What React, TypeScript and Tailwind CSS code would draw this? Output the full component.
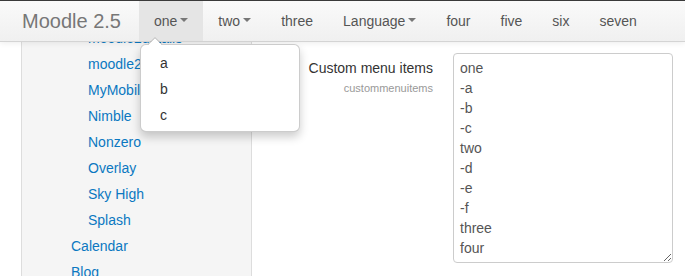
import React from "react";

const font = { fontFamily: '"Liberation Sans", Arial, sans-serif' };

function Caret() {
  return (
    <span className="inline-block w-0 h-0 ml-[3px] border-x-4 border-x-transparent border-t-4 border-t-[#777] align-middle mb-[2px]" />
  );
}

const navItems: { label: string; caret?: boolean; active?: boolean }[] = [
  { label: "one", caret: true, active: true },
  { label: "two", caret: true },
  { label: "three" },
  { label: "Language", caret: true },
  { label: "four" },
  { label: "five" },
  { label: "six" },
  { label: "seven" },
];

const themes = ["moodle2details", "moodle2bootstrap", "MyMobile", "Nimble", "Nonzero", "Overlay", "Sky High", "Splash"];

export default function App() {
  return (
    <div className="relative w-[685px] h-[276px] overflow-hidden bg-white" style={font}>
      {/* page body */}
      <div className="flex h-full pl-[21px]">
        <div className="w-[231px] h-full border-x border-[#dddddd] bg-[#f5f5f5] pt-[25px]">
          {themes.map((t) => (
            <div key={t} className="h-[26px] leading-[26px] pl-[66px] text-[14px] text-[#0b78c1] whitespace-nowrap">
              {t}
            </div>
          ))}
          <div className="h-[26px] leading-[26px] pl-[49px] text-[14px] text-[#0b78c1]">Calendar</div>
          <div className="h-[26px] leading-[26px] pl-[49px] text-[14px] text-[#0b78c1]">Blog</div>
        </div>
        <div className="flex-1 flex items-start pt-[53px]">
          <div className="w-[181px] text-right pt-[5px]">
            <div className="text-[14px] leading-[20px] text-[#333]">Custom menu items</div>
            <div className="text-[11px] leading-[14px] mt-[3px] text-[#999]">custommenuitems</div>
          </div>
          <textarea
            readOnly
            className="ml-[20px] w-[220px] h-[210px] border border-[#cccccc] rounded-[4px] px-[6px] py-[4px] text-[14px] leading-[20px] text-[#555] overflow-hidden resize bg-white outline-none"
            style={font}
            value={"one\n-a\n-b\n-c\ntwo\n-d\n-e\n-f\nthree\nfour\nfive\nsix\nseven"}
          />
        </div>
      </div>

      {/* fixed navbar */}
      <div className="absolute left-0 top-0 w-full h-[42px] border-t border-t-[#3a3a3a] border-b border-b-[#d4d4d4] bg-gradient-to-b from-[#fafafa] to-[#f0f0f0] shadow-[0_1px_6px_rgba(0,0,0,0.08)] flex items-stretch z-10">
        <div className="w-[139px] pl-[22px] flex items-center text-[20px] text-[#777] whitespace-nowrap">Moodle 2.5</div>
        {navItems.map((n) => (
          <div
            key={n.label}
            className={`px-[15px] flex items-center text-[14px] text-[#555] whitespace-nowrap ${n.active ? "bg-[#e5e5e5]" : ""}`}
          >
            {n.label}
            {n.caret && <Caret />}
          </div>
        ))}
      </div>

      {/* dropdown menu */}
      <div className="absolute left-[140px] top-[44px] w-[160px] bg-white border border-black/20 rounded-[6px] shadow-[0_5px_10px_rgba(0,0,0,0.2)] pt-[5px] pb-[3px] z-20">
        {["a", "b", "c"].map((i) => (
          <div key={i} className="pl-[19px] py-[3px] text-[14px] leading-[20px] text-[#333]">
            {i}
          </div>
        ))}
      </div>
      <svg className="absolute left-[148px] top-[37px] z-30" width="14" height="8" viewBox="0 0 14 8">
        <polygon points="0,8 7,1 14,8" fill="#ffffff" />
        <polyline points="0,7.5 7,0.7 14,7.5" fill="none" stroke="rgba(0,0,0,0.22)" strokeWidth="1" />
      </svg>
    </div>
  );
}
